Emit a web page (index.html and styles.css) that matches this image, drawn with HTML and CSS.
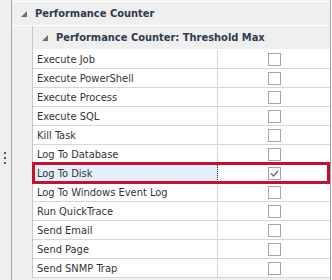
FILE: index.html
```html
<!DOCTYPE html>
<html>
<head>
<meta charset="utf-8">
<link rel="stylesheet" href="styles.css">
</head>
<body>
<div class="wrap">
  <div class="side">
    <span class="dot"></span><span class="dot"></span><span class="dot"></span>
  </div>
  <div class="main">
    <div class="cat">
      <svg class="tri" width="6" height="6" viewBox="0 0 6 6"><polygon points="6,0 6,6 0,6"/></svg>
      <span class="cat-text">Performance Counter</span>
    </div>
    <div class="area">
      <div class="indent"></div>
      <div class="sub">
        <div class="cat sub-cat">
          <svg class="tri" width="6" height="6" viewBox="0 0 6 6"><polygon points="6,0 6,6 0,6"/></svg>
          <span class="cat-text">Performance Counter: Threshold Max</span>
        </div>
        <div class="rows">
          <div class="row"><div class="name">Execute Job</div><div class="val"><span class="box"></span></div></div>
          <div class="row"><div class="name">Execute PowerShell</div><div class="val"><span class="box"></span></div></div>
          <div class="row"><div class="name">Execute Process</div><div class="val"><span class="box"></span></div></div>
          <div class="row"><div class="name">Execute SQL</div><div class="val"><span class="box"></span></div></div>
          <div class="row"><div class="name">Kill Task</div><div class="val"><span class="box"></span></div></div>
          <div class="row"><div class="name">Log To Database</div><div class="val"><span class="box"></span></div></div>
          <div class="row sel"><div class="name">Log To Disk</div><div class="val"><span class="box"><svg width="11" height="11" viewBox="0 0 11 11"><polyline points="2,5.5 4.5,8 9,3" /></svg></span></div></div>
          <div class="row"><div class="name">Log To Windows Event Log</div><div class="val"><span class="box"></span></div></div>
          <div class="row"><div class="name">Run QuickTrace</div><div class="val"><span class="box"></span></div></div>
          <div class="row"><div class="name">Send Email</div><div class="val"><span class="box"></span></div></div>
          <div class="row"><div class="name">Send Page</div><div class="val"><span class="box"></span></div></div>
          <div class="row"><div class="name">Send SNMP Trap</div><div class="val"><span class="box"></span></div></div>
        </div>
      </div>
    </div>
    <div class="highlight"></div>
  </div>
</div>
</body>
</html>
```
FILE: styles.css
```css
html, body {
  margin: 0;
  padding: 0;
  background: #ffffff;
}
body {
  width: 332px;
  height: 280px;
  overflow: hidden;
  font-family: "DejaVu Sans Condensed", "DejaVu Sans", sans-serif;
  font-stretch: condensed;
  font-size: 11px;
}
.wrap {
  display: flex;
  height: 280px;
}
.side {
  width: 11px;
  background: #f0f0f0;
  border-right: 1px solid #a8a8a8;
  display: flex;
  flex-direction: column;
  gap: 3px;
  padding-top: 152px;
  box-sizing: content-box;
}
.dot {
  display: block;
  width: 2px;
  height: 2px;
  margin-left: 4px;
  background: #5a5a5a;
}
.main {
  position: relative;
  width: 318px;
  background: #f0f0f0;
  border-right: 1px solid #a0a0a0;
  padding-top: 1px;
  display: flex;
  flex-direction: column;
}
.cat {
  height: 23px;
  border-top: 1px solid #ffffff;
  border-bottom: 1px solid #ffffff;
  background: #efefef;
  display: flex;
  align-items: center;
  padding-left: 9px;
}
.sub-cat {
  border-top: 0;
}
.tri {
  display: block;
  fill: #707070;
  margin-right: 8px;
  margin-top: 1px;
}
.cat-text {
  font-weight: bold;
  color: #2d3b4f;
}
.area {
  display: flex;
}
.indent {
  width: 20px;
  border-right: 1px solid #c6c6c6;
}
.sub {
  flex: 1;
}
.rows {
  background: #ffffff;
}
.row {
  display: flex;
  height: 18px;
  border-bottom: 1px solid #d6d6d6;
}
.name {
  width: 180px;
  padding-left: 4px;
  border-right: 1px solid #d6d6d6;
  color: #333333;
  display: flex;
  align-items: center;
}
.val {
  flex: 1;
  display: flex;
  align-items: center;
  justify-content: center;
}
.box {
  width: 11px;
  height: 11px;
  border: 1px solid #a6a6a6;
  background: #ffffff;
  display: block;
}
.box svg {
  display: block;
  fill: none;
  stroke: #6a6a6a;
  stroke-width: 1.3;
}
.sel .name {
  background: #e4f0fa;
  border-right: 1px dotted #222222;
}
.highlight {
  position: absolute;
  left: 20px;
  top: 162px;
  width: 298px;
  height: 22px;
  box-sizing: border-box;
  border: 3px solid #c5112f;
}
```
